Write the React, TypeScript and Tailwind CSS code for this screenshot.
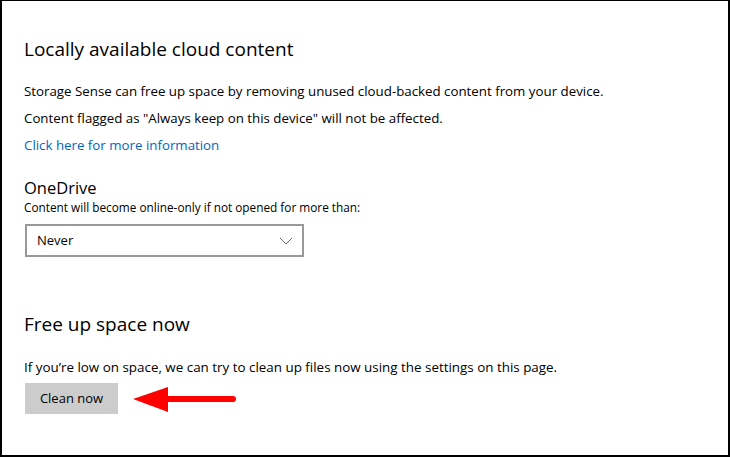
import React from "react";

export default function App() {
  const font = { fontFamily: '"Open Sans", "Noto Sans", sans-serif' };
  return (
    <div
      className="w-[730px] h-[457px] bg-white border-t border-l-2 border-r-2 border-b-2 border-black box-border text-black overflow-hidden"
      style={font}
    >
      <div className="pl-[22px] pt-[34px] flex flex-col">
        <h1 className="text-[19px] leading-[28px] font-normal">Locally available cloud content</h1>
        <div className="mt-[15px] flex flex-col text-[13.3px] leading-[27px]">
          <p>Storage Sense can free up space by removing unused cloud-backed content from your device.</p>
          <p>Content flagged as "Always keep on this device" will not be affected.</p>
          <a className="text-[#0067c0] w-fit">Click here for more information</a>
        </div>

        <h2 className="mt-[18px] text-[16.5px] leading-[22px] font-normal">OneDrive</h2>
        <p className="text-[11.8px] leading-[16px]">Content will become online-only if not opened for more than:</p>
        <div className="mt-[9px] ml-[1px] w-[279px] h-[33px] border-2 border-[#999999] flex items-center justify-between pl-[10px] pr-[8px]">
          <span className="text-[13px]">Never</span>
          <svg width="14" height="8" viewBox="0 0 14 8" className="mr-[1px]">
            <path d="M1 1 L7 7 L13 1" fill="none" stroke="#666666" strokeWidth="1" />
          </svg>
        </div>

        <h2 className="mt-[53px] text-[19px] leading-[28px] font-normal">Free up space now</h2>
        <p className="mt-[19px] text-[13.4px] leading-[20px]">
          If you’re low on space, we can try to clean up files now using the settings on this page.
        </p>
        <div className="mt-[6px] flex items-center gap-[15px] ml-[1px]">
          <button className="w-[93px] h-[31px] bg-[#cccccc] text-[13px] text-black">Clean now</button>
          <svg width="106" height="31" viewBox="0 0 106 31">
            <polygon points="0,16 35,4 35,29" fill="#ff0000" />
            <line x1="34" y1="16" x2="100" y2="16" stroke="#ff0000" strokeWidth="6" strokeLinecap="round" />
          </svg>
        </div>
      </div>
    </div>
  );
}
